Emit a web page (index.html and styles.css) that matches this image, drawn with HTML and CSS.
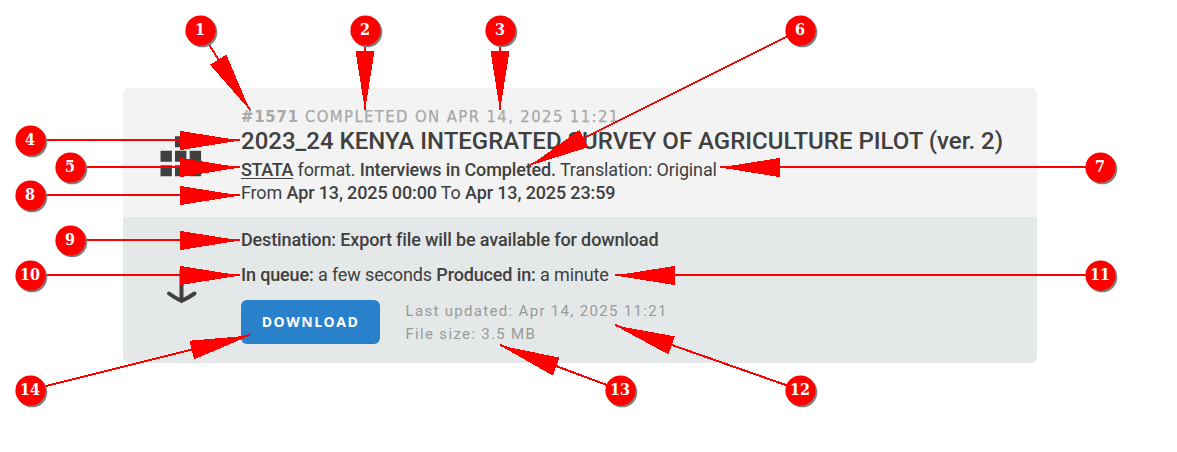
FILE: index.html
```
<!DOCTYPE html>
<html lang="en">
<head>
<meta charset="utf-8">
<title>Export status</title>
<link rel="stylesheet" href="styles.css">
</head>
<body>
<main class="page">
  <article class="card">
    <section class="panel panel-top">
      <div class="icon-cell icon-grid-cell">
        <svg class="icon" width="42" height="42" viewBox="0 0 42 42" fill="#404040"><path d="M15 1.200h11.400v11h-11.400zM.5 15.800h11.400v11h-11.400zM15 15.800h11.400v11h-11.400zM29.700 15.800h11.400v11h-11.400zM.5 30.300h11.400v11h-11.400zM15 30.300h11.400v11h-11.400zM29.700 30.300h11.400v11h-11.400z"/></svg>
      </div>
      <div class="content">
        <div class="status"><b class="job">#1571</b> <span class="state">COMPLETED ON APR 14, 2025 11:21</span></div>
        <h1 class="title">2023_24 KENYA INTEGRATED SURVEY OF AGRICULTURE PILOT (ver. 2)</h1>
        <p class="line"><b class="format">STATA</b> format. <b>Interviews in Completed.</b> Translation: Original</p>
        <p class="line">From <b>Apr 13, 2025 00:00</b> To <b>Apr 13, 2025 23:59</b></p>
      </div>
    </section>
    <section class="panel panel-bottom">
      <div class="icon-cell icon-arrow-cell">
        <svg class="icon" width="42" height="42" viewBox="0 0 42 42" fill="none" stroke="#404040" stroke-width="4"><path d="M21.500 6v32"/><path d="M9 29.500Q15 34 21.500 37Q28 34 34.500 29.500" stroke-linecap="round"/></svg>
      </div>
      <div class="content">
        <p class="line destination"><b>Destination: Export file will be available for download</b></p>
        <p class="line timing"><b>In queue:</b> a few seconds <b>Produced in:</b> a minute</p>
        <div class="actions">
          <button class="download">DOWNLOAD</button>
          <div class="meta"><div>Last updated: Apr 14, 2025 11:21</div><div>File size: 3.5 MB</div></div>
        </div>
      </div>
    </section>
  </article>
  <svg class="callouts" id="callouts" width="1177" height="452" viewBox="0 0 1177 452"></svg>
</main>
<script src="callouts.js"></script>
</body>
</html>
```
FILE: styles.css
```
* { box-sizing: border-box; }
body { margin: 0; background: #fff; overflow: hidden; }
.page { position: relative; width: 1177px; height: 452px; padding: 88px 140px 0 123px; font-family: Roboto, sans-serif; color: #404040; }
.card { width: 914px; height: 275px; border-radius: 6px; overflow: hidden; }
.panel { display: flex; }
.panel-top { height: 129px; background: #f3f3f3; padding-top: 18px; }
.panel-bottom { height: 146px; background: #e5e8e8; padding-top: 11px; }
.icon-cell { width: 118px; padding-left: 36.500px; flex: none; }
.icon-grid-cell { padding-top: 29px; }
.icon-arrow-cell { padding-top: 36px; }
.icon { display: block; }
.content { flex: 1; white-space: nowrap; }
.status { height: 21px; font: 16.500px/21px "DejaVu Sans Condensed", "DejaVu Sans", sans-serif; color: #a7a8a8; }
.job { letter-spacing: .8px; margin-right: 1.500px; }
.state { letter-spacing: 1.400px; -webkit-text-stroke: .25px #a7a8a8; }
.title { margin: 0 0 3px; font-size: 24px; line-height: 28px; font-weight: 500; }
.line { margin: 0; font-size: 18px; line-height: 23px; font-weight: 400; letter-spacing: -.135px; }
.line b { font-weight: 500; }
.line .format { letter-spacing: -.350px; text-decoration: underline; text-underline-offset: 2px; text-decoration-thickness: 1px; }
.timing { margin-top: 12px; }
.actions { display: flex; margin-top: 14px; gap: 25.500px; }
.download { width: 139px; height: 44px; padding: 0; border: 0; border-radius: 6px; background: #2a81cb; color: #fff; font: 700 14px/42px "Open Sans", sans-serif; letter-spacing: 1.500px; }
.meta { font-size: 15px; line-height: 23px; letter-spacing: 1.320px; color: #989a9a; }
.callouts { position: absolute; left: 0; top: 0; }
.leader { stroke: #f00; stroke-width: 2; shape-rendering: crispEdges; }
.head { fill: #f00; shape-rendering: crispEdges; }
.shadow { fill: #808080; }
.dot { fill: #f00; }
.number { fill: #fff; font: 700 16px "DejaVu Serif Condensed", "DejaVu Serif", serif; text-anchor: middle; }
```
FILE: callouts.js
```
// Each entry: number, badge centre x/y, arrow tip x/y.
const callouts = [
  [1, 200, 30, 250, 110], [2, 365, 30, 365, 110], [3, 500, 30, 500, 110],
  [4, 30, 140, 240, 140], [5, 70, 167, 240, 167], [6, 800, 30, 530, 165],
  [7, 1100, 167, 720, 167], [8, 30, 195, 240, 195], [9, 70, 240, 240, 240],
  [10, 30, 275, 240, 275], [11, 1100, 275, 615, 275], [12, 800, 390, 615, 325],
  [13, 620, 390, 500, 345], [14, 30, 390, 250, 335]
];
const svg = document.getElementById("callouts");
function add(tag, attrs, text) {
  const el = document.createElementNS("http://www.w3.org/2000/svg", tag);
  for (const k in attrs) el.setAttribute(k, attrs[k]);
  if (text) el.textContent = text;
  svg.appendChild(el);
}
for (const [n, cx, cy, tx, ty] of callouts) {
  const len = Math.hypot(tx - cx, ty - cy);
  const ux = (tx - cx) / len, uy = (ty - cy) / len;
  const bx = tx - ux * 60, by = ty - uy * 60, w = 9.6;
  add("line", { class: "leader", x1: cx, y1: cy, x2: tx, y2: ty });
  add("polygon", { class: "head", points: `${tx},${ty + .5} ${bx - uy * w},${by + ux * w + .5} ${bx + uy * w},${by - ux * w + .5}` });
  add("circle", { class: "shadow", cx: cx + 2.2, cy: cy + 2.2, r: 15.1 });
  add("circle", { class: "dot", cx: cx + .5, cy: cy + .5, r: 15.1 });
  add("text", { class: "number", x: cx, y: cy + 5 }, String(n));
}
```
